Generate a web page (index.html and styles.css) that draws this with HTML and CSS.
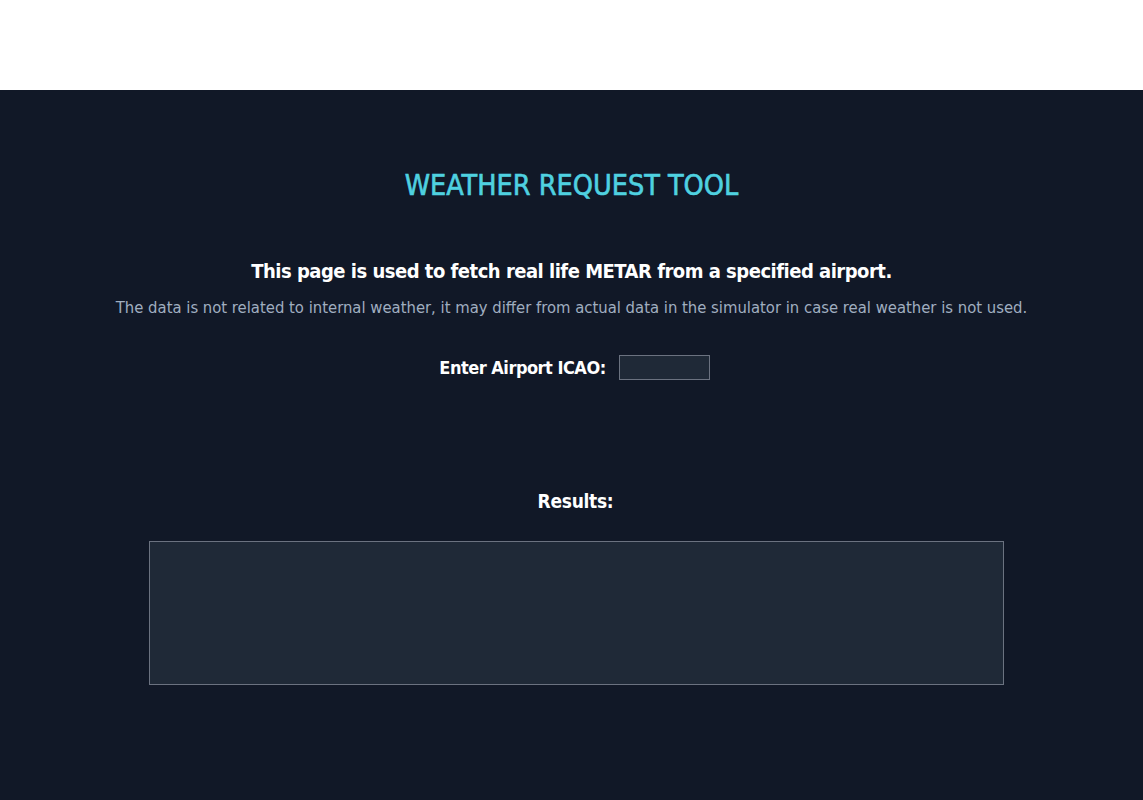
FILE: index.html
```html
<!DOCTYPE html>
<html>
<head>
<meta charset="utf-8">
<link rel="stylesheet" href="styles.css">
</head>
<body>
<div class="topbar"></div>
<main class="page">
  <h1 class="title">WEATHER REQUEST TOOL</h1>
  <p class="lead">This page is used to fetch real life METAR from a specified airport.</p>
  <p class="note">The data is not related to internal weather, it may differ from actual data in the simulator in case real weather is not used.</p>
  <div class="form-row">
    <label class="label" for="icao">Enter Airport ICAO:</label>
    <input class="icao" id="icao" type="text">
  </div>
  <h2 class="results-title">Results:</h2>
  <div class="results"></div>
</main>
</body>
</html>
```
FILE: styles.css
```css
html, body {
  margin: 0;
  padding: 0;
}
body {
  background: #111827;
  font-family: "DejaVu Sans Condensed", "DejaVu Sans", sans-serif;
  color: #ffffff;
  height: 800px;
  overflow: hidden;
}
.topbar {
  height: 90px;
  background: #ffffff;
}
.page {
  display: flex;
  flex-direction: column;
  align-items: center;
  padding-top: 78px;
}
.title {
  margin: 0;
  font-size: 28.5px;
  font-weight: 400;
  color: #4fd1e0;
  line-height: 36px;
  height: 36px;
  -webkit-text-stroke: 0.6px #4fd1e0;
}
.lead {
  margin: 53px 0 0;
  font-size: 20px;
  letter-spacing: -0.5px;
  line-height: 28px;
  font-weight: 700;
}
.note {
  margin: 12px 0 0;
  font-size: 16.5px;
  line-height: 22px;
  color: #a0aec0;
}
.form-row {
  margin: 36px 0 0 6px;
  display: flex;
  align-items: center;
  gap: 13px;
}
.label {
  font-size: 18px;
  letter-spacing: -0.5px;
  font-weight: 700;
}
.icao {
  width: 91px;
  height: 25px;
  box-sizing: border-box;
  background: #1f2937;
  border: 1px solid #6b7280;
  margin: 0;
  padding: 0 4px;
  color: #fff;
}
.results-title {
  margin: 107px 0 0 8px;
  font-size: 19px;
  letter-spacing: -0.3px;
  font-weight: 700;
  line-height: 28px;
}
.results {
  margin: 26px 0 0 10px;
  width: 855px;
  height: 144px;
  box-sizing: border-box;
  background: #1f2937;
  border: 1px solid #6b7280;
}
```
